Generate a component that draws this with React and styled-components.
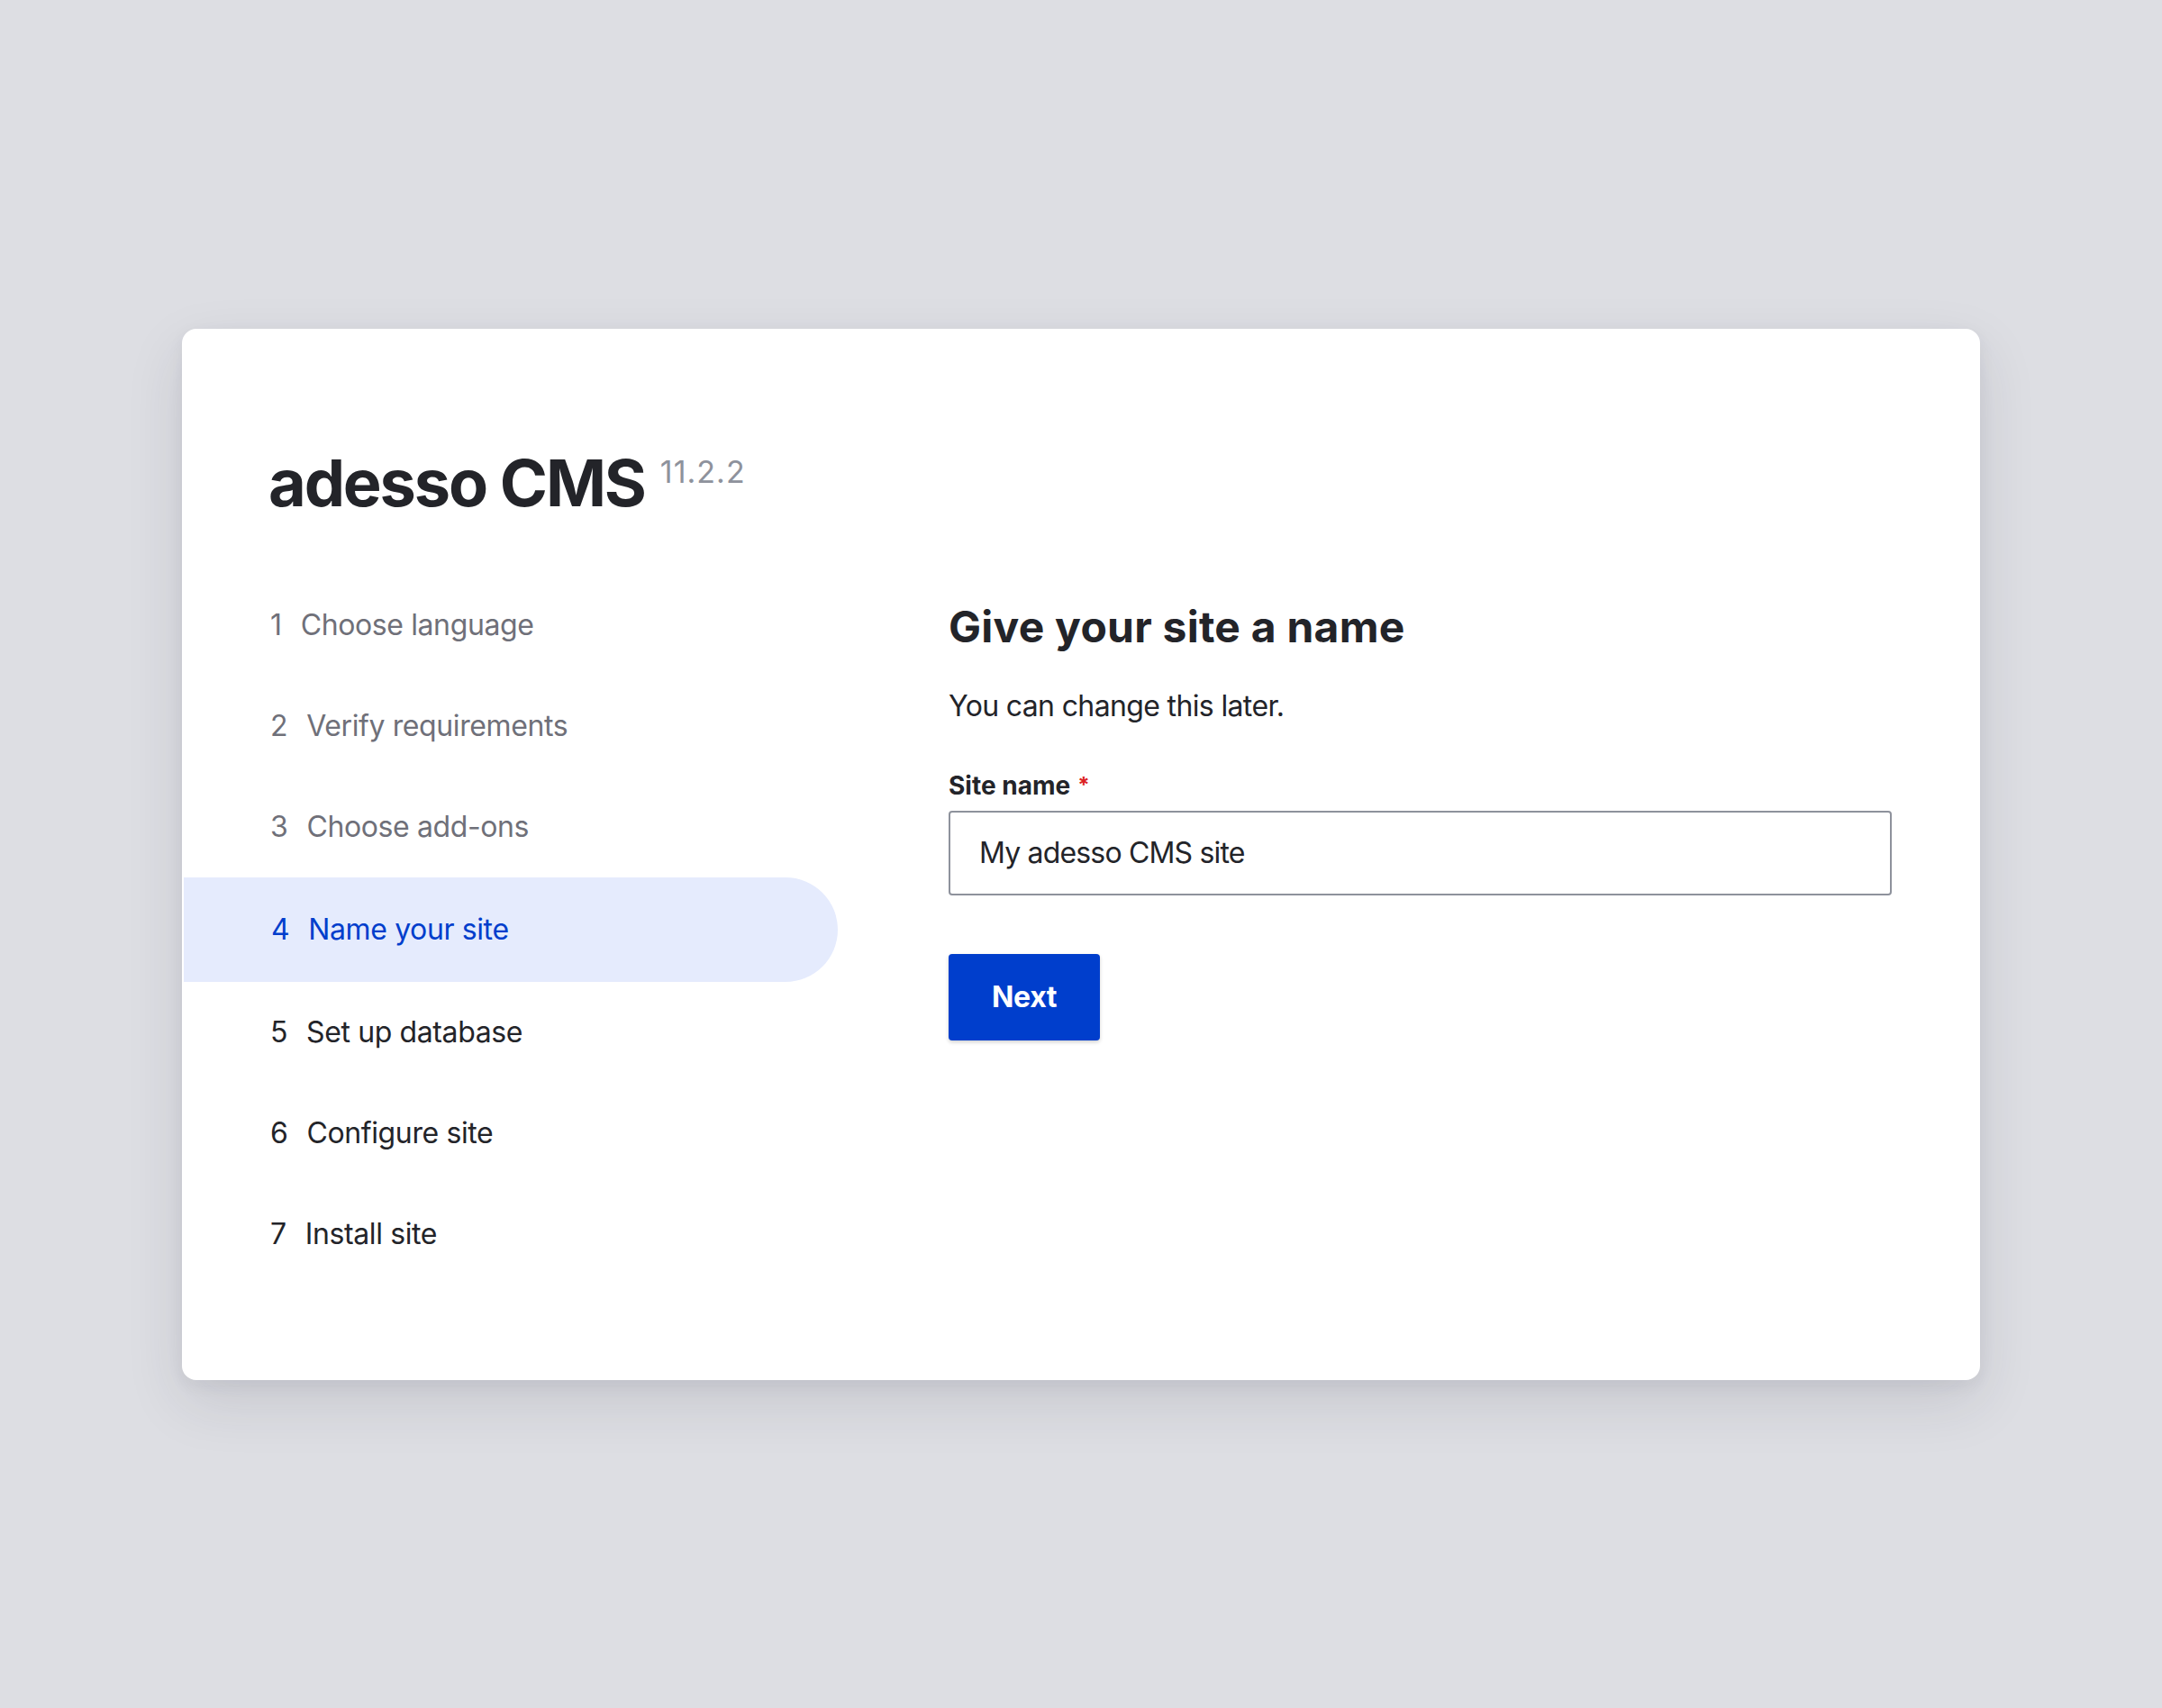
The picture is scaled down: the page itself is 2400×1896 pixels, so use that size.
import React from "react";
import styled, { createGlobalStyle } from "styled-components";

const GlobalStyle = createGlobalStyle`
  * { box-sizing: border-box; }
  html, body { margin: 0; padding: 0; }
  body {
    background: #dddee3;
    font-family: Inter, "Noto Sans", "Liberation Sans", sans-serif;
    color: #232429;
    -webkit-font-smoothing: antialiased;
  }
`;

const Page = styled.div`
  min-height: 100vh;
  display: flex;
  align-items: center;
  justify-content: center;
`;

const Card = styled.div`
  width: 1996px;
  height: 1167px;
  background: #ffffff;
  border-radius: 16px;
  padding: 126px 98px 0 96px;
  box-shadow: 0 24px 64px rgba(40, 42, 60, 0.12), 0 6px 18px rgba(40, 42, 60, 0.06);
  overflow: hidden;
`;

const Brand = styled.div`
  display: flex;
  align-items: flex-start;
  gap: 17px;
`;

const BrandName = styled.h1`
  margin: 0;
  font-size: 72px;
  line-height: 90px;
  font-weight: 700;
  letter-spacing: -0.03em;
  color: #232429;
`;

const Version = styled.span`
  margin-top: 13px;
  font-size: 34px;
  line-height: 40px;
  color: #8e929c;
  letter-spacing: 0.03em;
`;

const Body = styled.div`
  display: flex;
  gap: 123px;
  margin-top: 57px;
`;

const Steps = styled.ol`
  list-style: none;
  margin: 0;
  padding: 0;
  width: 632px;
  flex: none;
`;

const stepColors = {
  done: "#6f7079",
  active: "#003ecc",
  todo: "#232429",
};

const Step = styled.li`
  display: flex;
  align-items: center;
  height: ${(p) => (p.$state === "active" ? "116px" : "112px")};
  margin-left: -94px;
  padding-left: ${(p) => (p.$state === "active" ? "97px" : "96px")};
  font-size: 32px;
  line-height: 48px;
  letter-spacing: -0.012em;
  color: ${(p) => stepColors[p.$state]};
  background: ${(p) => (p.$state === "active" ? "#e5ebfd" : "transparent")};
  border-radius: 0 58px 58px 0;
`;

const StepNumber = styled.span`
  margin-right: 21px;
`;

const Form = styled.div`
  flex: 1;
  min-width: 0;
`;

const Heading = styled.h2`
  margin: 28px 0 0;
  font-size: 48px;
  line-height: 60px;
  font-weight: 700;
  letter-spacing: 0.005em;
  color: #232429;
`;

const Intro = styled.p`
  margin: 34px 0 0;
  font-size: 32px;
  line-height: 48px;
  letter-spacing: -0.02em;
  color: #232429;
`;

const Label = styled.label`
  display: block;
  margin-top: 46px;
  font-size: 28px;
  line-height: 36px;
  font-weight: 700;
  color: #232429;
`;

const Required = styled.span`
  display: inline-block;
  margin-left: 8px;
  margin-top: 6px;
  color: #dc2323;
  font-size: 24px;
  line-height: 24px;
  vertical-align: top;
`;

const Input = styled.input`
  display: block;
  width: 100%;
  height: 94px;
  margin-top: 10px;
  padding: 0 32px;
  border: 2px solid #8e929c;
  border-radius: 4px;
  font-family: inherit;
  font-size: 32px;
  letter-spacing: -0.026em;
  color: #232429;
  background: #ffffff;
  outline: none;
`;

const NextButton = styled.button`
  display: block;
  margin-top: 65px;
  height: 96px;
  padding: 0 48px;
  border: none;
  border-radius: 4px;
  background: #003ecc;
  color: #ffffff;
  font-family: inherit;
  font-size: 32px;
  font-weight: 700;
  letter-spacing: -0.01em;
  box-shadow: 0 2px 4px rgba(0, 0, 0, 0.18);
  cursor: pointer;
`;

const steps = [
  { n: 1, label: "Choose language", state: "done" },
  { n: 2, label: "Verify requirements", state: "done" },
  { n: 3, label: "Choose add-ons", state: "done" },
  { n: 4, label: "Name your site", state: "active" },
  { n: 5, label: "Set up database", state: "todo" },
  { n: 6, label: "Configure site", state: "todo" },
  { n: 7, label: "Install site", state: "todo" },
];

export default function App() {
  return (
    <>
      <GlobalStyle />
      <Page>
        <Card>
          <Brand>
            <BrandName>adesso CMS</BrandName>
            <Version>11.2.2</Version>
          </Brand>
          <Body>
            <Steps>
              {steps.map((s) => (
                <Step key={s.n} $state={s.state}>
                  <StepNumber>{s.n}</StepNumber>
                  {s.label}
                </Step>
              ))}
            </Steps>
            <Form>
              <Heading>Give your site a name</Heading>
              <Intro>You can change this later.</Intro>
              <Label htmlFor="site-name">
                Site name<Required>*</Required>
              </Label>
              <Input id="site-name" type="text" defaultValue="My adesso CMS site" />
              <NextButton type="button">Next</NextButton>
            </Form>
          </Body>
        </Card>
      </Page>
    </>
  );
}
